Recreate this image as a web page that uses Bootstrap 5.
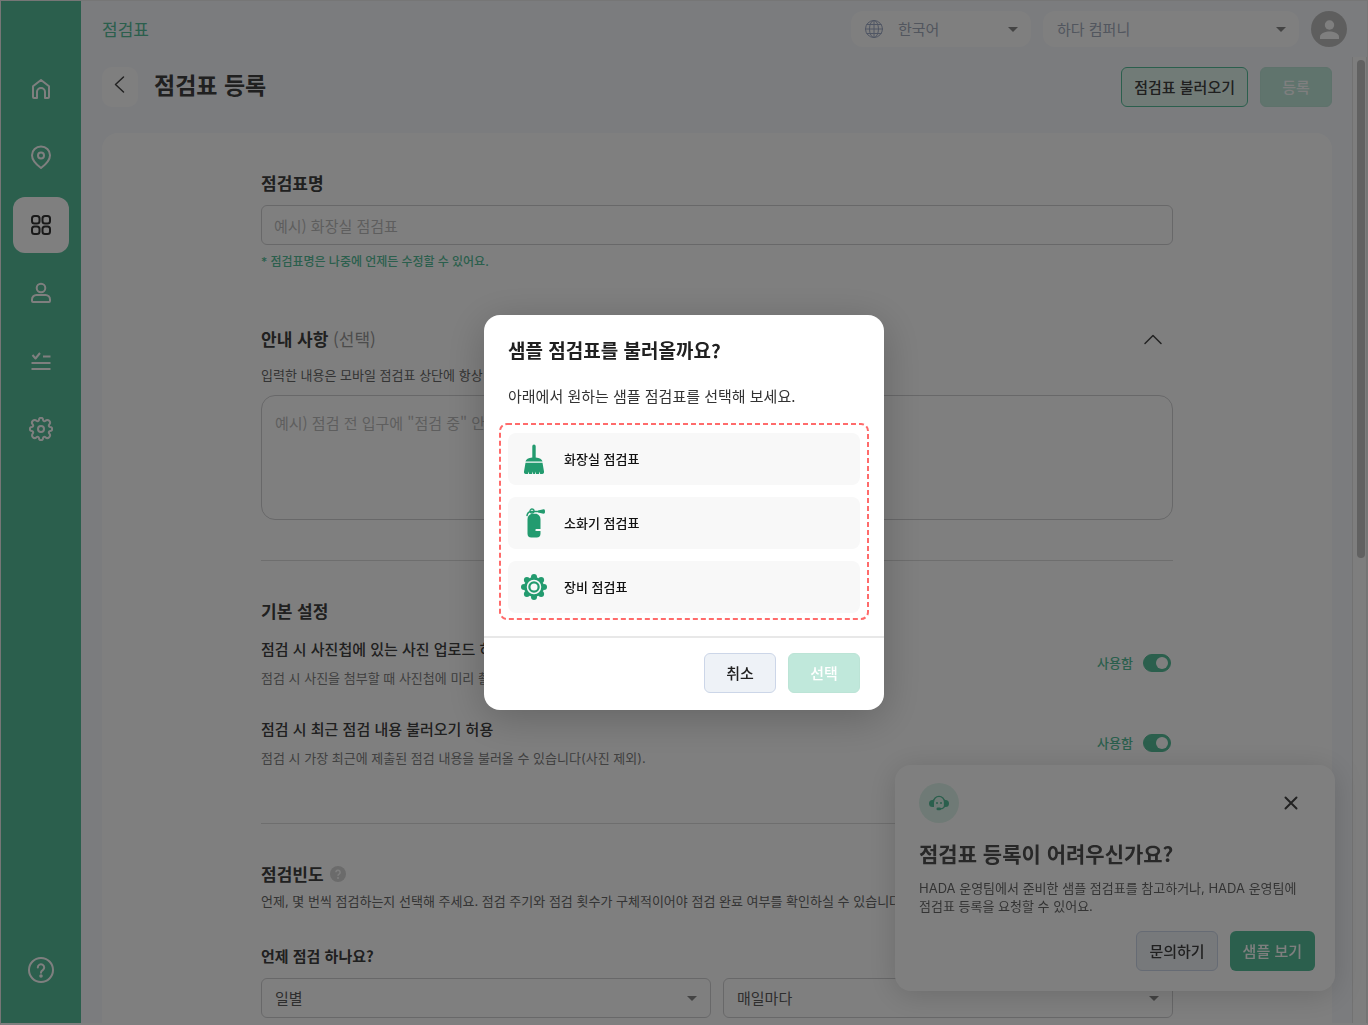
<!DOCTYPE html>
<html lang="ko">
<head>
<meta charset="utf-8">
<meta name="viewport" content="width=device-width, initial-scale=1">
<title>점검표 등록</title>
<link href="https://cdn.jsdelivr.net/npm/bootstrap@5.3.0/dist/css/bootstrap.min.css" rel="stylesheet">
<style>
:root{--brand:#56be9a;--ink:#404040;--line:#d0d0d2}
body{font-family:"Noto Sans CJK KR",sans-serif;font-size:15px;line-height:20px;color:var(--ink);background:#f7f9fd;overflow:hidden}
.app-shell{height:100vh;border:1px solid #ececec;border-bottom:2px solid #fff}
.side-rail{width:80px;background:var(--brand);padding:60px 0 25px;flex:none}
.rail-link{width:56px;height:56px;border-radius:12px;color:#fff}
.rail-link.active{background:#fff;color:#333}
.rail-list{gap:12px}
.gap-12{gap:12px}
.ico{fill:none;stroke:currentColor;stroke-width:2;stroke-linecap:round;stroke-linejoin:round;flex:none}
.ico-thin{stroke-width:1.500}
.ico-hair{stroke-width:1}
.topbar{height:56px;padding:0 5px 0 21px;gap:12px;flex:none}
.crumb{font-size:17px;line-height:24px;color:var(--brand)}
.form-select{--bs-form-select-bg-img:url("data:image/svg+xml,%3csvg xmlns='http://www.w3.org/2000/svg' viewBox='0 0 10 5'%3e%3cpath fill='%23888' d='M0 0h10l-5 5z'/%3e%3c/svg%3e");background-size:10px 5px;background-position:right 13px center;font-size:15px;line-height:20px;color:#5c5c5c}
.top-select{height:36px;border:0;border-radius:12px;background-color:#fff;color:#a4acbc;padding:0 28px 0 14px}
.lang-wrap{width:180px}
.lang-wrap .top-select{padding-left:47px}
.lang-wrap svg{left:13px;top:8px;color:#a0acc8}
.company-wrap{width:256px}
.avatar{width:36px;height:36px}
.page-body{padding:10px 20px 0 21px;min-width:0}
.back-btn{width:36px;height:40px;border-radius:10px;background:#fff;border:0;color:#444;padding:0}
.page-title{font-size:23px;line-height:32px;font-weight:700;margin:0 0 6px}
.btn-app{height:40px;border-radius:6px;padding:0 12px;font-size:15px;line-height:20px;font-weight:500;border:1px solid transparent}
.btn-soft{background:#e3f6ef;border-color:var(--brand);color:var(--ink)}
.btn-soft-off,.btn-soft-off:disabled{background:#c0e8db;color:#fff;opacity:1;border-color:#bce4d6;width:72px}
.btn-gray{background:#eef2f7;border-color:#ccd6e8;color:var(--ink)}
.btn-main{background:var(--brand);color:#fff}
.sheet{background:#fff;border-radius:16px 16px 0 0;margin-top:26px;padding:36px 24px 60px}
.sheet-in{max-width:912px}
.sec-title{font-size:17px;line-height:28px;font-weight:700;margin:0}
.sec-title span{font-weight:400;color:#999}
.guide-head{margin-top:54px}
.fold-btn svg{color:#444}
.sub-title{font-size:15px;font-weight:500;line-height:20px;margin:0}
.ask-title{font-weight:700;margin-bottom:12px}
.desc{font-family:Inter,"Noto Sans CJK KR",sans-serif;font-size:13px;line-height:18px;margin:0;color:#686868}
.desc-soft{color:#808080;margin-top:10px}
.desc-guide{margin:13px 0 11px}
.desc-cycle{margin:4px 0 36px}
.note{font-family:Inter,"Noto Sans CJK KR",sans-serif;font-size:12px;line-height:18px;color:var(--brand);font-weight:500;margin:8px 0 0}
.field{border:1px solid var(--line);border-radius:6px;height:40px;font-size:15px;padding:0 12px}
.field::placeholder{color:#bcbcbc}
select.field{padding-left:13px}
textarea.field{height:125px;border-radius:14px;padding:16px 13px;line-height:22px;resize:none}
.rule{border:0;border-top:1px solid #dcdcdc;opacity:1;color:inherit}
.rule-a{margin:40px 0 36px}
.rule-b{margin:56px 0 36px}
.opt-row{margin-top:32px}
.opt-first{margin-top:14px}
.opt-state{gap:10px;padding-right:2px}
.toggle-label{font-size:13px;color:var(--brand);font-weight:500}
.freq-head{gap:6px}
.form-switch.toggle{padding:0;margin:0;min-height:18px}
.toggle .form-check-input{width:28px;height:18px;margin:0;float:none;background-color:var(--brand);border-color:var(--brand);background-size:16px 16px;--bs-form-switch-bg:url("data:image/svg+xml,%3csvg xmlns='http://www.w3.org/2000/svg' viewBox='0 0 16 16'%3e%3ccircle cx='8' cy='8' r='7.5' fill='%23fff'/%3e%3c/svg%3e")}
.toggle .form-check-input:checked{background-image:var(--bs-form-switch-bg)}
.scroll-rail{width:15px;margin-top:56px;border-left:1px solid #e4e4e4;border-right:1px solid #e8e8e8;background:#fcfcfc;flex:none}
.scroll-thumb{width:8px;height:498px;border-radius:4px;background:#c2c2c2;margin:3px 1px 0 auto}
.help-card{position:fixed;right:33px;bottom:34px;width:440px;background:#fff;border-radius:16px;padding:18px 20px 20px 24px;box-shadow:0 4px 30px rgba(0,0,0,.16)}
.help-badge{width:40px;height:40px;background:#dff5ec;color:var(--brand)}
.help-title{font-size:21px;line-height:28px;font-weight:700;margin:16px 0 12px;color:#505050}
.close-btn{width:48px;height:40px;border:0;background:none;color:#444;padding:0}
.modal-dialog{max-width:400px}
.modal-content{border:0;border-radius:16px;box-shadow:0 8px 40px rgba(0,0,0,.22);color:#212121}
.modal-title{font-size:19px;line-height:28px;font-weight:700;margin:0 9px}
.modal-main{padding:21px 15px 16px}
.modal-lead{line-height:24px;margin:20px 9px 15px;color:#333}
.pick-zone{padding:10px 9px 7px;gap:12px}
.pick-frame{left:0;top:0;width:100%;height:100%;pointer-events:none}
.pick-frame rect{width:calc(100% - 2px);height:calc(100% - 2px);fill:none;stroke:#ff6b6b;stroke-width:2;stroke-dasharray:5 3}
.pick-row{height:52px;border:0;border-radius:8px;background:#f8f8f8;padding:0 12px;gap:16px;font-size:13px;font-weight:500;color:#111;text-align:left}
.pick-row svg{color:#239b6f;flex:none}
.modal-foot{border-top:2px solid #e8e8e8;padding:15px 24px 17px}
.modal-foot .btn-gray{width:72px;color:#212121}
</style>
</head>
<body>
<div class="app-shell d-flex">
  <nav class="side-rail d-flex flex-column align-items-center justify-content-between" aria-label="주 메뉴">
    <div class="rail-list d-flex flex-column">
      <a href="#" class="rail-link d-flex align-items-center justify-content-center" aria-label="홈"><svg class="ico" width="24" height="24" viewBox="0 0 24 24"><path d="M4 9.200 12 3l8 6.200V20a1 1 0 0 1-1 1h-3v-6a4 4 0 0 0-8 0v6H5a1 1 0 0 1-1-1z"/></svg></a>
      <a href="#" class="rail-link d-flex align-items-center justify-content-center" aria-label="위치"><svg class="ico" width="24" height="24" viewBox="0 0 24 24"><path d="M12 23C8 20 3 15.500 3 10.200a9 8.700 0 0 1 18 0C21 15.500 16 20 12 23z"/><circle cx="12" cy="10.500" r="3"/></svg></a>
      <a href="#" class="rail-link active d-flex align-items-center justify-content-center" aria-label="점검표"><svg class="ico" width="24" height="24" viewBox="0 0 24 24"><rect x="3" y="3" width="7.500" height="7.500" rx="2.500"/><rect x="13.500" y="3" width="7.500" height="7.500" rx="2.500"/><rect x="3" y="13.500" width="7.500" height="7.500" rx="2.500"/><rect x="13.500" y="13.500" width="7.500" height="7.500" rx="2.500"/></svg></a>
      <a href="#" class="rail-link d-flex align-items-center justify-content-center" aria-label="사용자"><svg class="ico" width="24" height="24" viewBox="0 0 24 24"><circle cx="12" cy="7" r="4.300"/><path d="M3 20v-1.500A4.500 4.500 0 0 1 7.500 14h9a4.500 4.500 0 0 1 4.500 4.500V20a1 1 0 0 1-1 1H4a1 1 0 0 1-1-1z"/></svg></a>
      <a href="#" class="rail-link d-flex align-items-center justify-content-center" aria-label="점검 현황"><svg class="ico" width="24" height="24" viewBox="0 0 24 24"><path d="m3.500 6 3 3.500L11 4M14 7.500h7.500M2.500 14h19M2.500 20h19" stroke-linecap="butt"/></svg></a>
      <a href="#" class="rail-link d-flex align-items-center justify-content-center" aria-label="설정"><svg class="ico" width="24" height="24" viewBox="0 0 24 24"><path d="M10 2.800a2 2 0 0 1 4 0c.2 1.300 1.400 1.800 2.500 1a2.600 2.600 0 0 1 3.700 3.700c-.8 1.100-.3 2.300 1 2.500a2 2 0 0 1 0 4c-1.300.2-1.800 1.400-1 2.500a2.600 2.600 0 0 1-3.700 3.700c-1.100-.8-2.300-.3-2.500 1a2 2 0 0 1-4 0c-.2-1.300-1.400-1.800-2.500-1a2.600 2.600 0 0 1-3.700-3.700c.8-1.100.3-2.300-1-2.500a2 2 0 0 1 0-4c1.300-.2 1.800-1.400 1-2.500a2.600 2.600 0 0 1 3.700-3.700c1.100.8 2.300.3 2.500-1z"/><circle cx="12" cy="12" r="3"/></svg></a>
    </div>
    <a href="#" class="rail-link d-flex align-items-center justify-content-center" aria-label="도움말"><svg class="ico" width="28" height="28" viewBox="0 0 28 28"><circle cx="14" cy="14" r="12"/><path d="M10.800 11.500a3.200 3.200 0 1 1 5 2.600c-1.200.8-1.800 1.300-1.800 2.400v.3"/><circle cx="14" cy="20" r=".8" fill="currentColor"/></svg></a>
  </nav>

  <div class="flex-grow-1 overflow-hidden d-flex flex-column">
    <header class="topbar d-flex align-items-center">
      <div class="crumb me-auto">점검표</div>
      <div class="lang-wrap position-relative">
        <svg class="ico ico-hair position-absolute" width="20" height="20" viewBox="0 0 20 20"><circle cx="10" cy="10" r="8.500"/><ellipse cx="10" cy="10" rx="4.500" ry="8.500"/><path d="M10 1.500v17M1.500 10h17M2.800 5.500h14.400M2.800 14.500h14.400"/></svg>
        <select class="form-select top-select" aria-label="언어"><option>한국어</option></select>
      </div>
      <div class="company-wrap"><select class="form-select top-select" aria-label="회사"><option>하다 컴퍼니</option></select></div>
      <button type="button" class="btn p-0 border-0 avatar d-flex" aria-label="내 계정"><svg width="36" height="36" viewBox="0 0 36 36"><circle cx="18" cy="18" r="18" fill="#bdbdbd"/><circle cx="18.500" cy="14" r="4.700" fill="#fff"/><path d="M9 28v-2c0-4 6-5.500 9.500-5.500S28 22 28 26v2z" fill="#fff"/></svg></button>
    </header>
    <main class="page-body d-flex flex-column flex-grow-1">
      <div class="d-flex align-items-center gap-3">
        <button type="button" class="back-btn d-flex align-items-center justify-content-center" aria-label="뒤로"><svg class="ico ico-thin" width="20" height="24" viewBox="0 0 20 24"><path d="m13.500 2-8 7.500 8 7.500"/></svg></button>
        <h1 class="page-title">점검표 등록</h1>
        <div class="ms-auto d-flex gap-12">
          <button type="button" class="btn btn-app btn-soft">점검표 불러오기</button>
          <button type="button" class="btn btn-app btn-soft-off" disabled>등록</button>
        </div>
      </div>

      <form class="sheet flex-grow-1">
        <div class="sheet-in mx-auto">
          <label for="sheetName" class="sec-title d-block mb-2">점검표명</label>
          <input id="sheetName" type="text" class="form-control field" placeholder="예시) 화장실 점검표">
          <p class="note">* 점검표명은 나중에 언제든 수정할 수 있어요.</p>

          <div class="guide-head d-flex justify-content-between align-items-center">
            <label for="guide" class="sec-title">안내 사항 <span>(선택)</span></label>
            <button type="button" class="fold-btn btn p-0 border-0 d-flex me-2" aria-label="접기"><svg class="ico ico-thin" width="24" height="24" viewBox="0 0 24 24"><path d="m4 16.500 8-8 8 8"/></svg></button>
          </div>
          <p class="desc desc-guide">입력한 내용은 모바일 점검표 상단에 항상 표시돼요.</p>
          <textarea id="guide" class="form-control field" placeholder="예시) 점검 전 입구에 &quot;점검 중&quot; 안내판을 세워 주세요."></textarea>

          <hr class="rule rule-a">
          <h2 class="sec-title">기본 설정</h2>
          <div class="opt-first d-flex align-items-center justify-content-between">
            <div><h3 class="sub-title">점검 시 사진첩에 있는 사진 업로드 허용</h3><p class="desc desc-soft">점검 시 사진을 첨부할 때 사진첩에 미리 촬영된 사진을 올릴 수 있습니다.</p></div>
            <div class="opt-state d-flex align-items-center"><label class="toggle-label" for="tg1">사용함</label><div class="form-check form-switch toggle d-flex"><input id="tg1" class="form-check-input" type="checkbox" role="switch" checked></div></div>
          </div>
          <div class="opt-row d-flex align-items-center justify-content-between">
            <div><h3 class="sub-title">점검 시 최근 점검 내용 불러오기 허용</h3><p class="desc desc-soft">점검 시 가장 최근에 제출된 점검 내용을 불러올 수 있습니다(사진 제외).</p></div>
            <div class="opt-state d-flex align-items-center"><label class="toggle-label" for="tg2">사용함</label><div class="form-check form-switch toggle d-flex"><input id="tg2" class="form-check-input" type="checkbox" role="switch" checked></div></div>
          </div>

          <hr class="rule rule-b">
          <div class="freq-head d-flex align-items-center">
            <h2 class="sec-title">점검빈도</h2>
            <svg width="16" height="16" viewBox="0 0 16 16" aria-hidden="true"><circle cx="8" cy="8" r="8" fill="#d6d6d6"/><path d="M5.900 6.300a2.100 2.100 0 1 1 3.200 1.800C8.300 8.600 8 9 8 9.700" fill="none" stroke="#fff" stroke-width="1.500"/><circle cx="8" cy="12" r="1" fill="#fff"/></svg>
          </div>
          <p class="desc desc-cycle text-nowrap">언제, 몇 번씩 점검하는지 선택해 주세요. 점검 주기와 점검 횟수가 구체적이어야 점검 완료 여부를 확인하실 수 있습니다.</p>
          <label for="cycle" class="sub-title ask-title d-block">언제 점검 하나요?</label>
          <div class="d-flex gap-12">
            <select id="cycle" class="form-select field"><option>일별</option></select>
            <select class="form-select field" aria-label="반복"><option>매일마다</option></select>
          </div>
        </div>
      </form>
    </main>
  </div>
  <div class="scroll-rail" aria-hidden="true"><div class="scroll-thumb"></div></div>
</div>

<aside class="help-card">
  <div class="d-flex justify-content-between">
    <div class="help-badge rounded-circle d-flex align-items-center justify-content-center"><svg width="20" height="16" viewBox="0 0 20 16" fill="currentColor"><path d="M5 4.500v7.500H3.500A3.500 3.500 0 0 1 3.500 5zM15 4.500v7.500h1.500a3.500 3.500 0 0 0 0-7z"/><path d="M4.500 7a5.500 5.700 0 0 1 11 0v3.500c0 2.300-1.800 3.200-4.500 3.300" fill="none" stroke="currentColor" stroke-width="1.300"/><circle cx="8" cy="8" r="1"/><circle cx="12" cy="8" r="1"/><rect x="7.500" y="12.500" width="4.500" height="2.700" rx="1.300"/></svg></div>
    <button type="button" class="close-btn d-flex align-items-center justify-content-center" aria-label="닫기"><svg class="ico" width="14" height="14" viewBox="0 0 14 14"><path d="m1.500 1.500 11 11m0-11-11 11"/></svg></button>
  </div>
  <h2 class="help-title">점검표 등록이 어려우신가요?</h2>
  <p class="desc text-nowrap">HADA 운영팀에서 준비한 샘플 점검표를 참고하거나, HADA 운영팀에<br>점검표 등록을 요청할 수 있어요.</p>
  <div class="d-flex justify-content-end mt-3 gap-12">
    <button type="button" class="btn btn-app btn-gray">문의하기</button>
    <button type="button" class="btn btn-app btn-main">샘플 보기</button>
  </div>
</aside>

<div class="modal-backdrop show"></div>
<div class="modal d-block" tabindex="-1" role="dialog" aria-labelledby="pickTitle" aria-modal="true">
  <div class="modal-dialog modal-dialog-centered">
    <div class="modal-content">
      <div class="modal-main">
        <h2 class="modal-title" id="pickTitle">샘플 점검표를 불러올까요?</h2>
        <p class="modal-lead">아래에서 원하는 샘플 점검표를 선택해 보세요.</p>
        <div class="pick-zone position-relative d-grid">
          <svg class="pick-frame position-absolute" aria-hidden="true"><rect x="1" y="1" rx="7"/></svg>
          <button type="button" class="pick-row d-flex align-items-center"><svg width="28" height="32" viewBox="0 0 28 32" fill="currentColor"><path d="M12.300 3.300a1.700 1.700 0 0 1 3.400 0V14.500c4 .6 6.300 1.700 6.800 4h-17c.5-2.300 2.800-3.400 6.800-4z"/><path d="M5.500 19.800h17L24 28.500c.2 1.500-.4 2.500-1.800 2.500h-2l-.7-2.500-.5 2.500h-3l-.5-2.500-.5 2.500h-1.800l-.5-2.500-.6 2.500h-3L8.600 28.500 8 31H5.800C4.400 31 3.800 30 4 28.500z"/></svg><span>화장실 점검표</span></button>
          <button type="button" class="pick-row d-flex align-items-center"><svg width="28" height="32" viewBox="0 0 28 32" fill="currentColor"><path d="M11.500 6.800h5c2.800 1 4 3 4 5.700V22H16l-1 1.200L16.500 24h4v2.500c0 2.700-1.200 4-3.800 4h-5.400c-2.600 0-3.800-1.300-3.800-4v-14c0-2.700 1.200-4.700 4-5.700z"/><path d="M7 8.500c.5-2.500 2-3.800 4-4h7" fill="none" stroke="currentColor" stroke-width="1.500" stroke-linecap="round"/><circle cx="12" cy="4" r="2" fill="none" stroke="currentColor" stroke-width="1.300"/><path d="m18 3.500 5.500-1.200c1 0 1.500.6 1.500 2.200s-.5 2.200-1.500 2.200L18 5.500z"/></svg><span>소화기 점검표</span></button>
          <button type="button" class="pick-row d-flex align-items-center"><svg width="28" height="32" viewBox="0 0 28 32" fill="currentColor"><circle cx="14" cy="16" r="10"/><circle cx="14" cy="6" r="3"/><circle cx="14" cy="26" r="3"/><circle cx="4" cy="16" r="3"/><circle cx="24" cy="16" r="3"/><circle cx="6.900" cy="8.900" r="3"/><circle cx="21.100" cy="8.900" r="3"/><circle cx="6.900" cy="23.100" r="3"/><circle cx="21.100" cy="23.100" r="3"/><circle cx="14" cy="16" r="6.500" fill="none" stroke="#f8f8f8" stroke-width="1.500"/><circle cx="14" cy="16" r="3.500" fill="#f8f8f8"/></svg><span>장비 점검표</span></button>
        </div>
      </div>
      <div class="modal-foot d-flex justify-content-end gap-12">
        <button type="button" class="btn btn-app btn-gray">취소</button>
        <button type="button" class="btn btn-app btn-soft-off" disabled>선택</button>
      </div>
    </div>
  </div>
</div>
<script src="https://cdn.jsdelivr.net/npm/bootstrap@5.3.0/dist/js/bootstrap.bundle.min.js"></script>
</body>
</html>
